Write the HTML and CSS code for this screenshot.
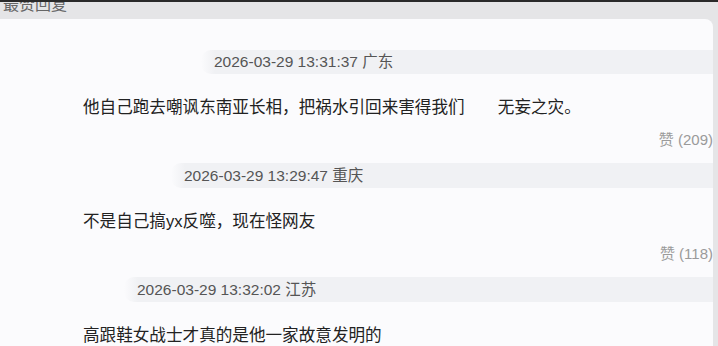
FILE: index.html
```html
<!DOCTYPE html>
<html lang="zh-CN">
<head>
    <meta charset="UTF-8">
    <meta name="viewport" content="width=device-width, initial-scale=1.0">
    <title>最赞回复</title>
    <link rel="stylesheet" href="styles.css">
</head>
<body>

    <!-- Header -->
    <div class="top-line"></div>
    <header class="panel-head">
        <h2>最赞回复</h2>
    </header>

    <!-- Replies -->
    <section class="card">
        <div class="reply">
            <div class="meta meta-a">2026-03-29 13:31:37 广东</div>
            <p class="text">他自己跑去嘲讽东南亚长相，把祸水引回来害得我们　　无妄之灾。</p>
            <div class="likes">赞 (209)</div>
        </div>
        <div class="reply">
            <div class="meta meta-b">2026-03-29 13:29:47 重庆</div>
            <p class="text">不是自己搞yx反噬，现在怪网友</p>
            <div class="likes">赞 (118)</div>
        </div>
        <div class="reply">
            <div class="meta meta-c">2026-03-29 13:32:02 江苏</div>
            <p class="text">高跟鞋女战士才真的是他一家故意发明的</p>
        </div>
    </section>

</body>
</html>
```

FILE: styles.css
```css
/* Global Styles */
* {
    margin: 0;
    padding: 0;
    box-sizing: border-box;
}
body {
    font-family: "Liberation Sans", "Noto Sans CJK SC", sans-serif;
    background: #e5e5e7;
    color: #222;
    height: 346px;
    overflow: hidden;
}

/* Header */
.top-line {
    height: 2px;
    background: #2a2a2a;
}
.panel-head {
    height: 17px;
    overflow: hidden;
    padding-left: 3px;
}
.panel-head h2 {
    font-size: 16px;
    font-weight: normal;
    line-height: 16px;
    margin-top: -5px;
    color: #666;
}

/* Card */
.card {
    background: #fbfbfd;
    margin-right: 5px;
    border-radius: 0 8px 0 0;
    padding-top: 31px;
    min-height: 330px;
}
.reply {
    margin-bottom: 13px;
}
.meta {
    height: 24px;
    line-height: 24px;
    font-size: 15.5px;
    color: #555;
    padding-left: 13px;
    background: linear-gradient(to right, rgba(240, 241, 243, 0), #f0f1f4 14px);
    border-radius: 10px 0 0 10px;
}
.meta-a {
    margin-left: 201px;
}
.meta-b {
    margin-left: 171px;
    height: 25px;
    line-height: 25px;
}
.meta-c {
    margin-left: 124px;
    height: 25px;
    line-height: 25px;
}
.text {
    margin-top: 22px;
    padding-left: 83px;
    font-size: 16.6px;
    line-height: 24px;
    color: #222;
}
.likes {
    margin-top: 10px;
    text-align: right;
    font-size: 15px;
    line-height: 20px;
    color: #9a9a9a;
}
```
